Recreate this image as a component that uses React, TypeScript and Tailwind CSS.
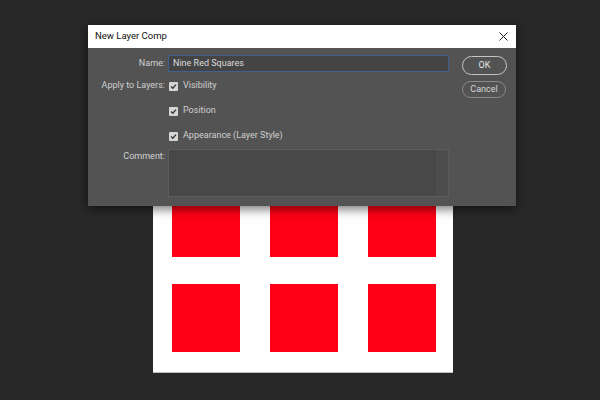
import React from "react";

const font = { fontFamily: "Roboto, 'Liberation Sans', sans-serif" };

function Check() {
  return (
    <span className="w-[9px] h-[9px] bg-[#d6d6d6] rounded-[1px] flex items-center justify-center shrink-0">
      <svg width="7" height="7" viewBox="0 0 7 7">
        <path d="M1 3.6 L2.8 5.3 L6 1.6" fill="none" stroke="#3a3a3a" strokeWidth="1.4" />
      </svg>
    </span>
  );
}

function CheckRow({ label }: { label: string }) {
  return (
    <div className="flex items-center gap-[5px] h-[14px] pl-[1px]">
      <Check />
      <span>{label}</span>
    </div>
  );
}

export default function App() {
  const squares = Array.from({ length: 9 });
  return (
    <div className="w-[600px] h-[400px] bg-[#282828] relative overflow-hidden" style={font}>
      {/* Document canvas */}
      <div className="pl-[153px] pt-[73px]">
        <div className="w-[300px] h-[300px] bg-white pl-[19px] pt-[21px] grid grid-cols-[68px_68px_68px] auto-rows-[68px] gap-x-[30px] gap-y-[27px] border-b border-[#bdbdbd]">
          {squares.map((_, i) => (
            <div key={i} className="bg-[#ff0016]" />
          ))}
        </div>
      </div>

      {/* Dialog */}
      <div className="absolute left-[88px] top-[25px] w-[428px] h-[181px] flex flex-col bg-[#535353] shadow-[0_3px_10px_rgba(0,0,0,0.55)]">
        <div className="h-[23px] bg-white flex items-center justify-between pl-[7px] pr-[8px] text-[9.5px] text-[#111]">
          <span>New Layer Comp</span>
          <svg width="9" height="9" viewBox="0 0 9 9">
            <path d="M0.5 0.5 L8.5 8.5 M8.5 0.5 L0.5 8.5" stroke="#222" strokeWidth="1" />
          </svg>
        </div>
        <div className="flex items-start flex-1 pt-[7px] text-[9px] text-[#d0d0d0]">
          <div className="grid grid-cols-[77px_281px] gap-x-[3px] items-start content-start">
            <div className="h-[17px] flex items-center justify-end">Name:</div>
            <div className="h-[17px] bg-[#444] border border-[#41608f] flex items-center pl-[4px] text-[#dcdcdc]">
              Nine Red Squares
            </div>

            <div className="h-[14px] mt-[7px] flex items-center justify-end">Apply to Layers:</div>
            <div className="mt-[7px] flex flex-col gap-[11px]">
              <CheckRow label="Visibility" />
              <CheckRow label="Position" />
              <CheckRow label="Appearance (Layer Style)" />
            </div>

            <div className="mt-[6px] h-[16px] flex items-center justify-end">Comment:</div>
            <div className="mt-[6px] h-[48px] bg-[#484848] border border-[#5c5c5c] flex justify-end">
              <div className="w-[12px] bg-[#4d4d4d]" />
            </div>
          </div>
          <div className="ml-[13px] flex flex-col gap-[6px] pt-[1px]">
            <div className="w-[45px] h-[19px] rounded-full border-[1.5px] border-[#c4c4c4] flex items-center justify-center text-[#e6e6e6]">
              OK
            </div>
            <div className="w-[44px] h-[17px] rounded-full border border-[#8a8a8a] flex items-center justify-center text-[#d4d4d4]">
              Cancel
            </div>
          </div>
        </div>
      </div>
    </div>
  );
}
